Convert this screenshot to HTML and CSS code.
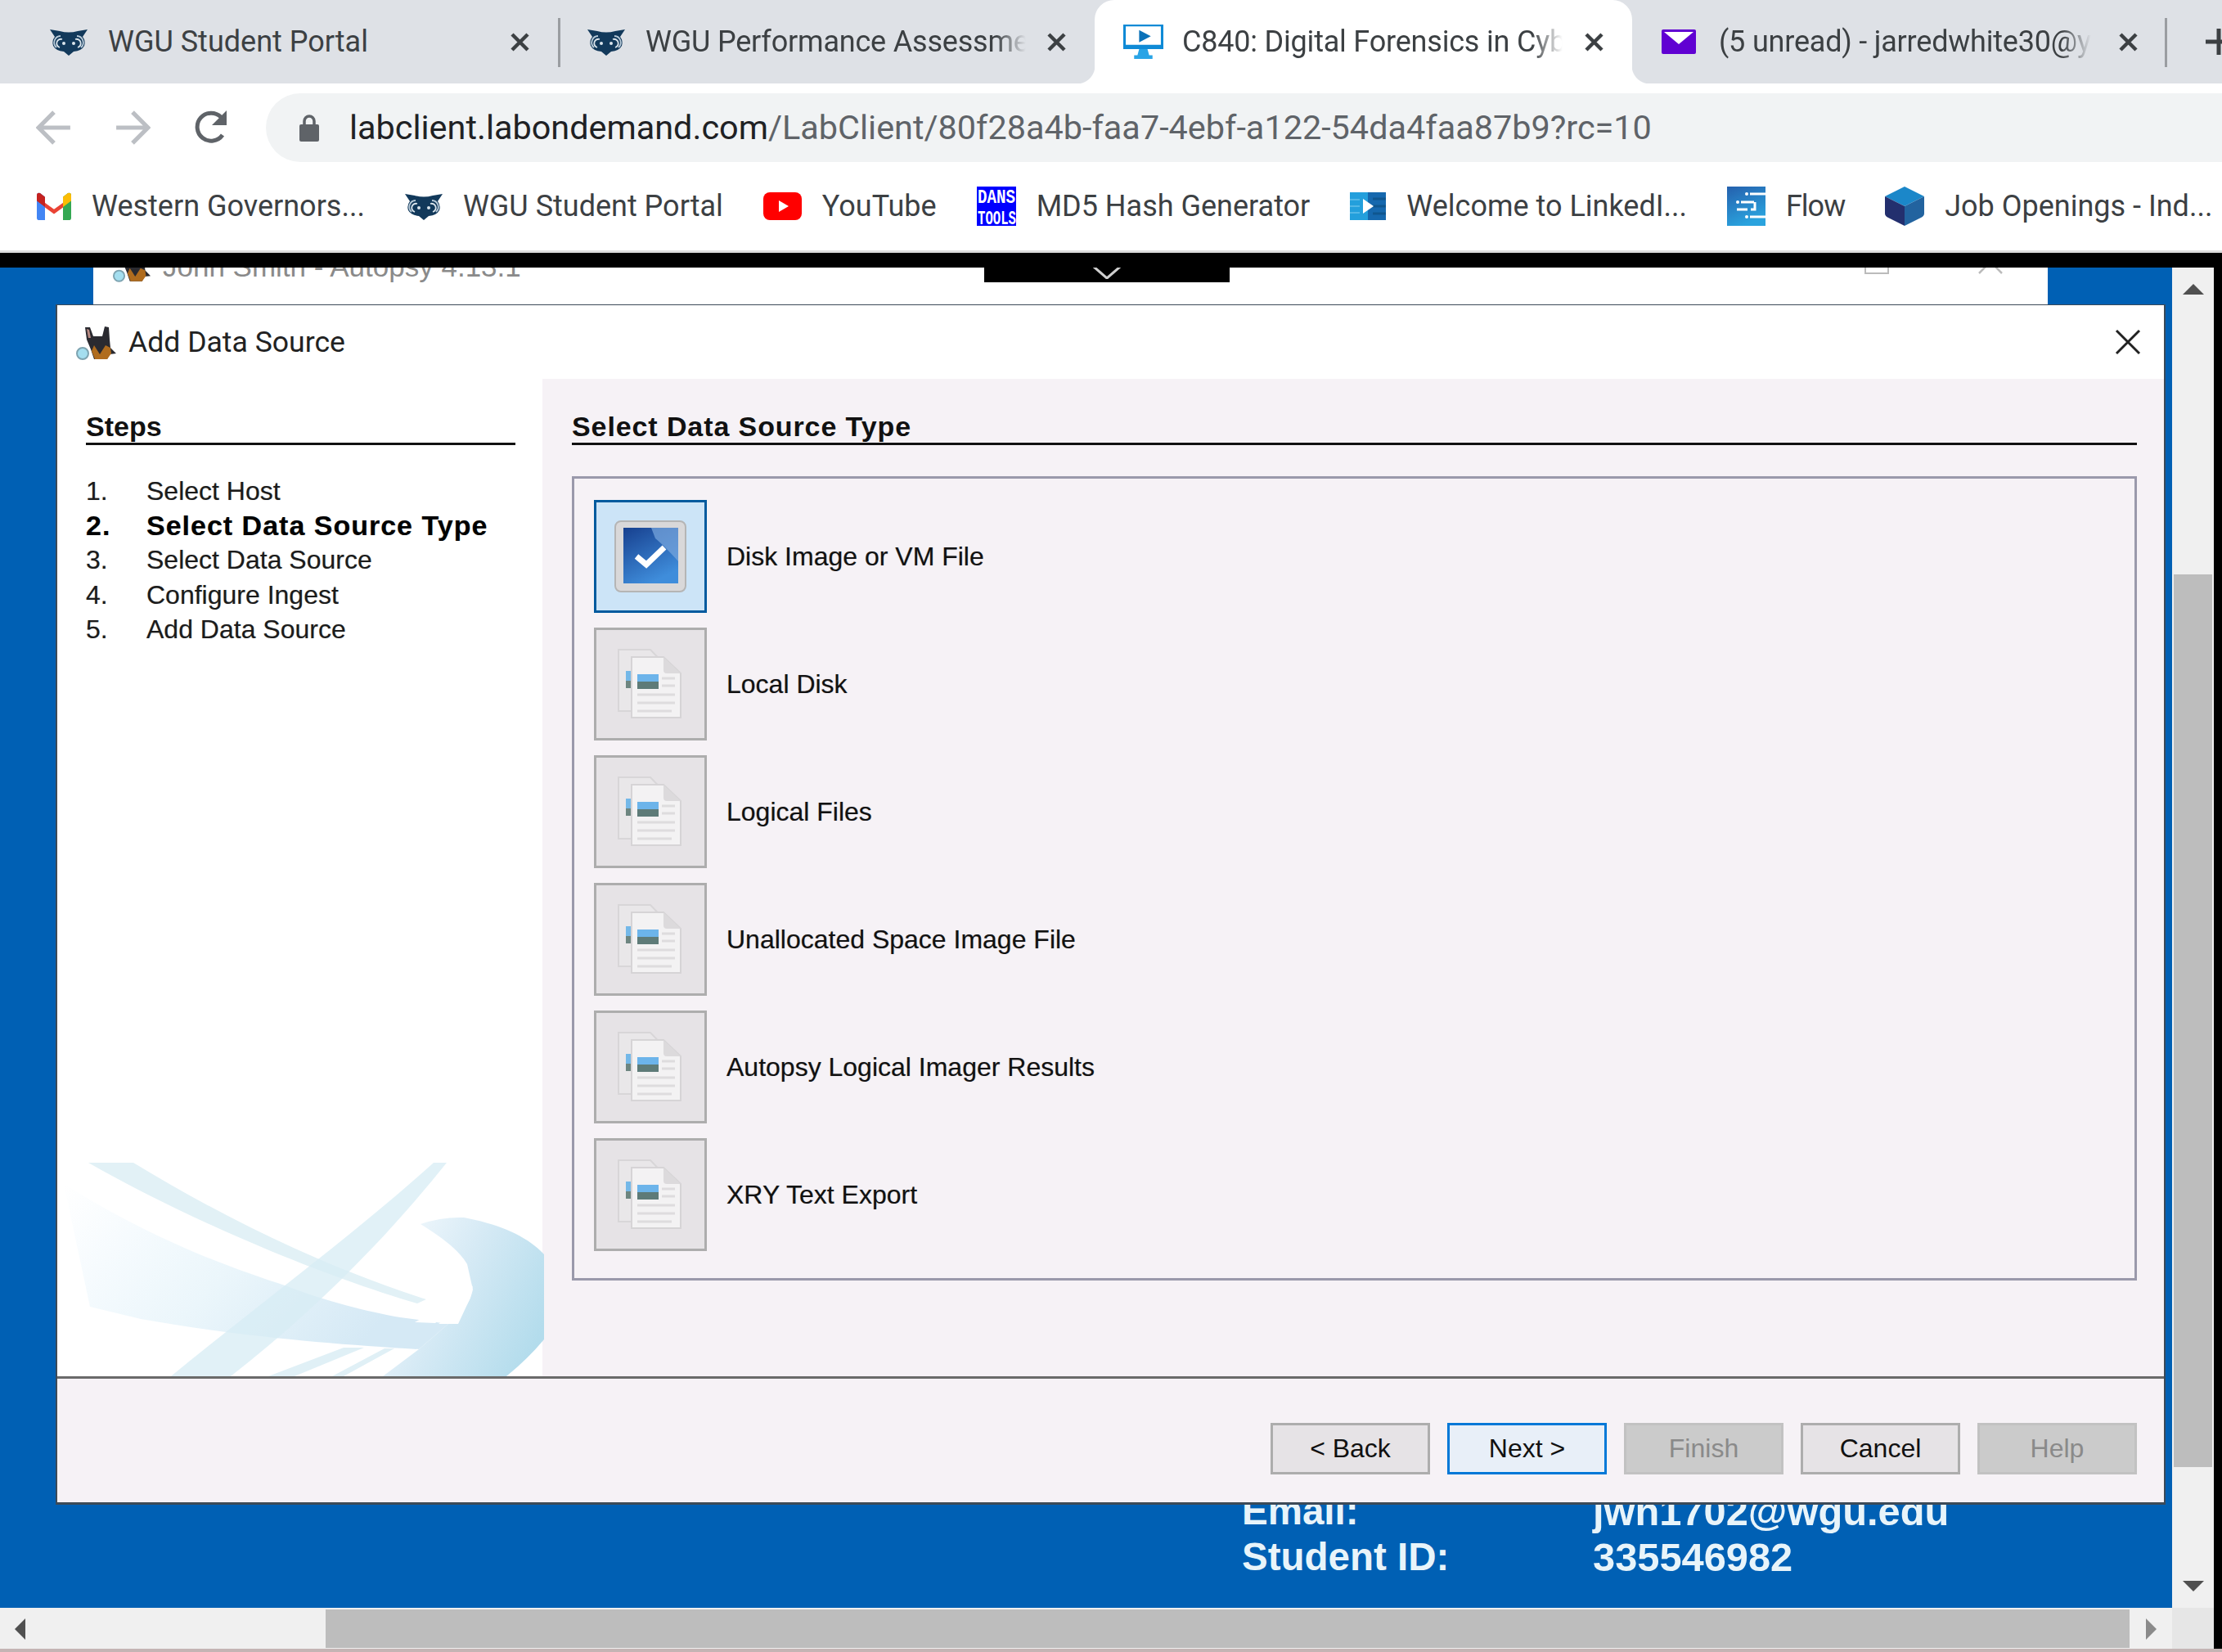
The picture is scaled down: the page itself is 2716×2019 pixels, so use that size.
FILE: index.html
```html
<!DOCTYPE html>
<html lang="en">
<head>
    <meta charset="UTF-8">
    <meta name="viewport" content="width=device-width, initial-scale=1.0">
    <title>Add Data Source</title>
    <link rel="stylesheet" href="styles.css">
</head>
<body>
  <svg class="defs" width="0" height="0">
    <defs>
      <symbol id="owl" viewBox="0 0 46 33">
        <path d="M0 1 L12 3 Q23 6 34 3 L46 1 L40 10 Q44 15 42 21 Q39 27 29 28 L23 33 L17 28 Q7 27 4 21 Q2 15 6 10 Z" fill="#12395b"/>
        <path d="M8 23 A8 8 0 0 1 13 9 M38 23 A8 8 0 0 0 33 9" fill="none" stroke="#b9cbd9" stroke-width="1.8"/>
        <path d="M12 23 A5 5 0 0 1 15 13 M34 23 A5 5 0 0 0 31 13" fill="none" stroke="#dbe5ec" stroke-width="1.8"/>
        <circle cx="17" cy="18" r="2" fill="#dbe5ec"/>
        <circle cx="29" cy="18" r="2" fill="#dbe5ec"/>
      </symbol>
      <symbol id="x-mark" viewBox="0 0 23 23">
        <path d="M2 2 L21 21 M21 2 L2 21" stroke="#3c4043" stroke-width="4.5"/>
      </symbol>
      <symbol id="docs" viewBox="0 0 80 90">
        <path d="M1 3 H40 L60 24 V78 H1 Z" fill="#e9e7e9" stroke="#d8d6d8" stroke-width="2"/>
        <rect x="10" y="29" width="12" height="12" fill="#74b8e8"/>
        <rect x="10" y="41" width="12" height="9" fill="#6d8580"/>
        <path d="M17 12 H56 L77 32 V86 H17 Z" fill="#f3f2f3" stroke="#d6d4d6" stroke-width="2"/>
        <path d="M56 12 L77 32 H60 Q56 32 56 28 Z" fill="#dcdadc"/>
        <rect x="24" y="33" width="26" height="9" fill="#6cb4ea"/>
        <rect x="24" y="42" width="26" height="9" fill="#5e7b78"/>
        <path d="M54 38 H70 M54 47 H70 M24 58 H70 M24 68 H70 M24 78 H66" stroke="#dedcde" stroke-width="3"/>
      </symbol>
      <linearGradient id="screen-fill" x1="0" y1="0" x2="0.5" y2="1">
        <stop offset="0" stop-color="#17408f"/>
        <stop offset="1" stop-color="#3f8ddb"/>
      </linearGradient>
      <linearGradient id="swoosh-a" x1="0" y1="0" x2="1" y2="0.4">
        <stop offset="0" stop-color="#ffffff"/>
        <stop offset="0.25" stop-color="#f6fbfe"/>
        <stop offset="0.55" stop-color="#ebf6fb"/>
        <stop offset="1" stop-color="#d5e9f5"/>
      </linearGradient>
      <linearGradient id="swoosh-b" x1="0" y1="0.2" x2="1" y2="0.7">
        <stop offset="0" stop-color="#f3f9fd"/>
        <stop offset="0.45" stop-color="#d6eaf5"/>
        <stop offset="1" stop-color="#b3dcec"/>
      </linearGradient>
      <linearGradient id="flow-fill" x1="0" y1="0" x2="0.4" y2="1">
        <stop offset="0" stop-color="#2560ad"/>
        <stop offset="1" stop-color="#2aa3de"/>
      </linearGradient>
    </defs>
  </svg>

  <div class="tabstrip">
    <div class="tab tab-first">
      <svg class="tab-icon" viewBox="0 0 46 33"><use href="#owl"/></svg>
      <span class="tab-title">WGU Student Portal</span>
      <svg class="tab-x" viewBox="0 0 23 23"><use href="#x-mark"/></svg>
    </div>
    <div class="tab tab-second">
      <svg class="tab-icon" viewBox="0 0 46 33"><use href="#owl"/></svg>
      <span class="tab-title fade">WGU Performance Assessmer</span>
      <svg class="tab-x" viewBox="0 0 23 23"><use href="#x-mark"/></svg>
    </div>
    <div class="tab tab-active">
      <svg class="tab-icon" viewBox="0 0 48 56" preserveAspectRatio="none">
        <path d="M0 0 H48 V40 H0 Z" fill="#fff"/>
        <path d="M1.5 1.5 H46.5 V38 H1.5 Z" fill="none" stroke="#0f8ad6" stroke-width="3"/>
        <rect y="33" width="48" height="7" fill="#0f8ad6"/>
        <path d="M19 9 L33 19 L19 29 Z" fill="#0b72b9"/>
        <path d="M19 40 H29 L31 50 H35 V56 H13 V50 H17 Z" fill="#29a4e6"/>
      </svg>
      <span class="tab-title fade">C840: Digital Forensics in Cyb</span>
      <svg class="tab-x" viewBox="0 0 23 23"><use href="#x-mark"/></svg>
    </div>
    <div class="tab tab-last">
      <svg class="tab-icon" viewBox="0 0 42 30">
        <rect width="42" height="30" rx="2" fill="#6001d2"/>
        <path d="M3 3 H39 L21 18 Z" fill="#fff"/>
      </svg>
      <span class="tab-title fade">(5 unread) - jarredwhite30@y</span>
      <svg class="tab-x" viewBox="0 0 23 23"><use href="#x-mark"/></svg>
    </div>
    <svg class="new-tab" viewBox="0 0 32 32"><path d="M16 0 V32 M0 16 H32" stroke="#3c4043" stroke-width="5"/></svg>
  </div>

  <div class="toolbar">
    <svg class="nav-icon back" viewBox="0 0 42 42"><path d="M40 21 H4 M21 3 L3 21 L21 39" fill="none" stroke="#bcbfc4" stroke-width="5"/></svg>
    <svg class="nav-icon forward" viewBox="0 0 42 42"><path d="M2 21 H38 M21 3 L39 21 L21 39" fill="none" stroke="#bcbfc4" stroke-width="5"/></svg>
    <svg class="nav-icon reload" viewBox="0 0 44 44"><path d="M36 31 A17 17 0 1 1 34 9" fill="none" stroke="#5f6368" stroke-width="5"/><path d="M41 1 V19 H23 Z" fill="#5f6368"/></svg>
    <div class="omnibox">
      <svg class="lock" viewBox="0 0 24 34"><path d="M6 15 V9 A6 6 0 0 1 18 9 V15" fill="none" stroke="#5f6368" stroke-width="3.5"/><rect y="13" width="24" height="21" rx="2" fill="#5f6368"/></svg>
      <span class="url"><b>labclient.labondemand.com</b>/LabClient/80f28a4b-faa7-4ebf-a122-54da4faa87b9?rc=10</span>
    </div>
  </div>

  <div class="bookmarks">
    <a class="mark">
      <svg viewBox="0 0 42 36" width="42" height="34" preserveAspectRatio="none">
        <path d="M0 6 L21 22 L42 6 V12 L21 28 L0 12 Z" fill="#ea4335"/>
        <path d="M0 4 Q0 0 4 1 L10 6 V36 H3 Q0 36 0 33 Z" fill="#4285f4"/>
        <path d="M42 4 Q42 0 38 1 L32 6 V36 H39 Q42 36 42 33 Z" fill="#34a853"/>
        <path d="M32 6 L38 1 Q42 0 42 4 V11 L32 19 Z" fill="#fbbc04"/>
        <path d="M0 4 Q0 0 4 1 L10 6 V19 L0 11 Z" fill="#c5221f"/>
      </svg>
      <span>Western Governors...</span>
    </a>
    <a class="mark">
      <svg viewBox="0 0 46 33" width="46" height="33"><use href="#owl"/></svg>
      <span>WGU Student Portal</span>
    </a>
    <a class="mark">
      <svg viewBox="0 0 47 34" width="47" height="34"><rect width="47" height="34" rx="8" fill="#f00"/><path d="M19 10 L31 17 L19 24 Z" fill="#fff"/></svg>
      <span>YouTube</span>
    </a>
    <a class="mark">
      <svg class="dans" viewBox="0 0 48 48" width="48" height="48">
        <rect width="48" height="48" fill="#0000ff"/>
        <text x="1" y="20" textLength="46" lengthAdjust="spacingAndGlyphs">DANS</text>
        <text x="1" y="46" textLength="47" lengthAdjust="spacingAndGlyphs">TOOLS</text>
      </svg>
      <span>MD5 Hash Generator</span>
    </a>
    <a class="mark">
      <svg viewBox="0 0 44 34" width="44" height="34">
        <rect width="22" height="34" fill="#239fdc"/>
        <rect x="22" width="22" height="34" fill="#1668ae"/>
        <path d="M0 9 H12 M0 17 H12 M0 25 H12" stroke="#53b7e6" stroke-width="2"/>
        <path d="M28 8 H44 M28 17 H44 M28 26 H44" stroke="#0f568f" stroke-width="3"/>
        <path d="M16 8 L29 17 L16 26 Z" fill="#fff"/>
      </svg>
      <span>Welcome to LinkedI...</span>
    </a>
    <a class="mark mark-flow">
      <svg viewBox="0 0 47 48" width="47" height="48">
        <rect width="47" height="48" fill="url(#flow-fill)"/>
        <circle cx="24" cy="9" r="2" fill="#fff"/>
        <circle cx="13" cy="19" r="2" fill="#fff"/>
        <circle cx="24" cy="37" r="2" fill="#fff"/>
        <path d="M28 9 H47 M17 19 H33 M12 28 H25 M29 28 H34 V19 M28 37 H47" fill="none" stroke="#fff" stroke-width="3"/>
      </svg>
      <span>Flow</span>
    </a>
    <a class="mark">
      <svg viewBox="0 0 48 48" width="48" height="48"><path d="M24 0 L48 12 L24 24 L0 12 Z" fill="#1b87c9"/><path d="M0 12 L24 24 V48 L4 38 Q0 36 0 33 Z" fill="#232f6e"/><path d="M48 12 L24 24 V48 L44 38 Q48 36 48 33 Z" fill="#22639f"/></svg>
      <span>Job Openings - Ind...</span>
    </a>
  </div>

  <div class="remote-bar"></div>

  <div class="remote">
    <div class="screen">
      <div class="behind-window">
        <svg class="behind-dog" viewBox="8 5 50 44" width="47" height="42"><use href="#dog"/></svg>
        <span class="behind-title">John Smith - Autopsy 4.13.1</span>
        <span class="behind-max"></span>
        <svg class="behind-close" viewBox="0 0 30 30" width="30" height="30"><path d="M1 1 L29 29 M29 1 L1 29" stroke="#bbb" stroke-width="2.5"/></svg>
      </div>
      <div class="drop-tab">
        <svg viewBox="0 0 34 16" width="34" height="16"><path d="M1 1 L17 15 L33 1" fill="none" stroke="#cfcfcf" stroke-width="3"/></svg>
      </div>

      <dl class="student-info">
        <dt>Email:</dt><dd>jwh1702@wgu.edu</dd>
        <dt>Student ID:</dt><dd>335546982</dd>
      </dl>

      <div class="dialog">
        <div class="dialog-title">
          <svg class="dog" viewBox="8 5 50 44" width="50" height="44">
            <g id="dog">
              <path d="M19 9 L25 9 L29 20 H40 L43 8 L48 9 L49 24 L50 34 L57 41 L49 42 L46 48 H30 L26 36 L21 24 Z" fill="#2a2a30"/>
              <path d="M21 11 L24 12 L26 22 L23 22 Z" fill="#b98b83"/>
              <path d="M30 31 L37 42 L44 31 L50 34 L51 41 L46 48 H31 L27 38 Z" fill="#b06c1e"/>
              <circle cx="16" cy="41" r="7" fill="#a4deef" stroke="#7da3b0" stroke-width="2"/>
            </g>
          </svg>
          <span class="dialog-name">Add Data Source</span>
          <svg class="dialog-close" viewBox="0 0 32 32" width="32" height="32"><path d="M2 2 L30 30 M30 2 L2 30" stroke="#222" stroke-width="3"/></svg>
        </div>

        <div class="dialog-body">
          <aside class="steps">
            <h4 class="rule-head">Steps</h4>
            <ol class="step-list">
              <li><span>1.</span>Select Host</li>
              <li class="current"><span>2.</span>Select Data Source Type</li>
              <li><span>3.</span>Select Data Source</li>
              <li><span>4.</span>Configure Ingest</li>
              <li><span>5.</span>Add Data Source</li>
            </ol>
            <svg class="swoosh" viewBox="0 0 595 261" width="595" height="261">
              <path d="M8 26 C110 90 200 125 281 151 C330 170 380 182 419 189 L478 197 L442 228 C340 222 220 212 102 191 L40 176 Z" fill="url(#swoosh-a)"/>
              <path d="M38 0 H93 C200 65 320 125 451 167 L440 172 C330 140 170 75 38 0 Z" fill="#e2f1f6"/>
              <path d="M460 0 H476 C400 95 310 185 212 261 H139 C250 170 360 90 460 0 Z" fill="#d7ecf4" fill-opacity="0.75"/>
              <path d="M258 261 L350 226 H375 L290 261 Z M336 261 L400 227 H412 L350 261 Z" fill="#e0f0f6"/>
              <path d="M444 75 Q470 66 497 67 C540 75 575 90 595 112 V216 Q575 240 549 261 H398 L442 228 L478 197 C495 185 505 170 508 155 L501 124 C490 105 465 88 444 75 Z" fill="url(#swoosh-b)"/>
              <path d="M437 195 L469 177 L482 167 L492 172 L462 196 Z M466 197 L490 180 L508 150 L505 165 L490 197 Z" fill="#fff"/>
            </svg>
          </aside>

          <section class="types">
            <h4 class="rule-head">Select Data Source Type</h4>
            <div class="type-box">
              <div class="type-row">
                <div class="type-btn selected">
                  <svg viewBox="0 0 88 88" width="88" height="88">
                    <rect x="1" y="1" width="86" height="86" rx="7" fill="#d9d8d9" stroke="#b5b5b5" stroke-width="2"/>
                    <rect x="11" y="9" width="67" height="68" fill="url(#screen-fill)"/>
                    <path d="M45 9 H78 V50 Q60 30 50 22 Z" fill="#7ba8de" fill-opacity="0.7"/>
                    <path d="M27 44 L39 54 L61 33" fill="none" stroke="#fff" stroke-width="7"/>
                  </svg>
                </div>
                <span class="type-label">Disk Image or VM File</span>
              </div>
              <div class="type-row">
                <div class="type-btn"><svg viewBox="0 0 80 90" width="80" height="90"><use href="#docs"/></svg></div>
                <span class="type-label">Local Disk</span>
              </div>
              <div class="type-row">
                <div class="type-btn"><svg viewBox="0 0 80 90" width="80" height="90"><use href="#docs"/></svg></div>
                <span class="type-label">Logical Files</span>
              </div>
              <div class="type-row">
                <div class="type-btn"><svg viewBox="0 0 80 90" width="80" height="90"><use href="#docs"/></svg></div>
                <span class="type-label">Unallocated Space Image File</span>
              </div>
              <div class="type-row">
                <div class="type-btn"><svg viewBox="0 0 80 90" width="80" height="90"><use href="#docs"/></svg></div>
                <span class="type-label">Autopsy Logical Imager Results</span>
              </div>
              <div class="type-row">
                <div class="type-btn"><svg viewBox="0 0 80 90" width="80" height="90"><use href="#docs"/></svg></div>
                <span class="type-label">XRY Text Export</span>
              </div>
            </div>
          </section>
        </div>

        <div class="dialog-foot">
          <button type="button">&lt; Back</button>
          <button type="button" class="default">Next &gt;</button>
          <button type="button" disabled>Finish</button>
          <button type="button">Cancel</button>
          <button type="button" disabled>Help</button>
        </div>
      </div>
    </div>

    <div class="vscroll">
      <span class="arrow arrow-up"></span>
      <div class="vthumb"></div>
      <span class="arrow arrow-down"></span>
    </div>
    <div class="remote-edge"></div>
  </div>

  <div class="hscroll">
    <span class="arrow arrow-left"></span>
    <div class="hthumb"></div>
    <span class="arrow arrow-right"></span>
    <div class="corner"></div>
  </div>
</body>
</html>
```

FILE: styles.css
```css
* {
    box-sizing: border-box;
}
html, body {
    margin: 0;
    padding: 0;
}
body {
    width: 2716px;
    height: 2019px;
    overflow: hidden;
    background-color: #c4b4b4;
    font-family: "Liberation Sans", Arial, sans-serif;
    color: #000;
}
.defs {
    display: block;
    height: 0;
}

/* tabs */
.tabstrip {
    height: 102px;
    display: flex;
    background-color: #dee1e6;
    position: relative;
}
.tab {
    flex: none;
    display: flex;
    align-items: center;
    height: 102px;
    padding-right: 35px;
    font-family: Roboto, sans-serif;
    font-size: 36px;
    color: #3c4043;
    position: relative;
}
.tab-first {
    width: 682px;
    padding-left: 61px;
}
.tab-second {
    width: 656px;
    padding-left: 33px;
    border-left: 3px solid #9a9da1;
    background-clip: padding-box;
}
.tab-second::after {
    content: "";
    position: absolute;
    left: -3px;
    top: 0;
    width: 3px;
    height: 22px;
    background-color: #dee1e6;
}
.tab-second::before {
    content: "";
    position: absolute;
    left: -3px;
    bottom: 0;
    width: 3px;
    height: 20px;
    background-color: #dee1e6;
}
.tab-active {
    width: 657px;
    padding-left: 35px;
    background-color: #fff;
    border-radius: 24px 24px 0 0;
}
.tab-active::before,
.tab-active::after {
    content: "";
    position: absolute;
    bottom: 0;
    width: 22px;
    height: 22px;
}
.tab-active::before {
    left: -22px;
    background: radial-gradient(circle at 0 0, transparent 22px, #fff 23px);
}
.tab-active::after {
    right: -22px;
    background: radial-gradient(circle at 100% 0, transparent 22px, #fff 23px);
}
.tab-last {
    width: 653px;
    padding-left: 36px;
}
.tab-icon {
    width: 46px;
    height: 33px;
    flex: none;
    margin-right: 25px;
}
.tab-active .tab-icon {
    width: 49px;
    height: 42px;
    margin-right: 23px;
}
.tab-last .tab-icon {
    width: 42px;
    height: 30px;
    margin-right: 28px;
}
.tab-title {
    white-space: nowrap;
    overflow: hidden;
    flex: none;
    max-width: 465px;
}
.fade {
    letter-spacing: -0.2px;
    -webkit-mask-image: linear-gradient(to right, #000 92%, transparent 100%);
    mask-image: linear-gradient(to right, #000 92%, transparent 100%);
}
.tab-x {
    flex: none;
    width: 23px;
    height: 23px;
    margin-left: auto;
}
.tab-last::after {
    content: "";
    position: absolute;
    right: -1px;
    top: 22px;
    height: 60px;
    width: 3px;
    background-color: #9a9da1;
}
.new-tab {
    flex: none;
    width: 32px;
    height: 32px;
    margin: 35px 0 0 48px;
}

/* toolbar */
.toolbar {
    height: 96px;
    display: flex;
    align-items: flex-start;
    background-color: #fff;
    padding: 12px 0 0 44px;
}
.nav-icon {
    flex: none;
    width: 44px;
    height: 44px;
    margin-top: 20px;
}
.forward {
    margin-left: 52px;
}
.reload {
    margin-left: 52px;
}
.omnibox {
    margin-left: 45px;
    flex: 1;
    height: 84px;
    display: flex;
    align-items: center;
    padding-left: 41px;
    background-color: #f1f3f4;
    border-radius: 42px 0 0 42px;
}
.lock {
    width: 24px;
    height: 34px;
    flex: none;
}
.url {
    margin-left: 37px;
    font-family: Roboto, sans-serif;
    font-size: 41.4px;
    color: #5f6368;
    white-space: nowrap;
}
.url b {
    font-weight: normal;
    color: #202124;
}

/* bookmarks */
.bookmarks {
    height: 111px;
    display: flex;
    align-items: center;
    gap: 49px;
    padding-left: 45px;
    background-color: #fff;
    border-bottom: 3px solid #dcdcdc;
    white-space: nowrap;
}
.mark {
    display: flex;
    align-items: center;
    gap: 25px;
    font-family: Roboto, sans-serif;
    font-size: 36px;
    color: #3c4043;
}
.mark svg {
    flex: none;
}
.mark-flow {
    letter-spacing: -1px;
}
.dans text {
    font-family: "Liberation Mono", monospace;
    font-size: 24px;
    font-weight: bold;
    letter-spacing: 0;
    fill: #fff;
}

/* remote session */
.remote-bar {
    height: 18px;
    background-color: #000;
}
.remote {
    height: 1638px;
    display: flex;
}
.screen {
    flex: none;
    width: 2655px;
    background-color: #0060b4;
    position: relative;
    overflow: hidden;
}
.behind-window {
    position: absolute;
    left: 114px;
    top: 0;
    width: 2389px;
    height: 45px;
    background-color: #fff;
    overflow: hidden;
}
.behind-dog {
    position: absolute;
    left: 24px;
    top: -24px;
}
.behind-title {
    position: absolute;
    left: 85px;
    top: -21px;
    font-size: 35px;
    color: #8a8a8a;
    white-space: nowrap;
}
.behind-max {
    position: absolute;
    left: 2165px;
    top: -20px;
    width: 30px;
    height: 28px;
    border: 2px solid #bbb;
}
.behind-close {
    position: absolute;
    left: 2304px;
    top: -22px;
}
.drop-tab {
    position: absolute;
    left: 1203px;
    top: 0;
    width: 300px;
    height: 18px;
    background-color: #000;
    display: flex;
    justify-content: center;
}
.drop-tab svg {
    margin-top: -2px;
}
.student-info {
    position: absolute;
    left: 1518px;
    top: 1493px;
    margin: 0;
    display: grid;
    grid-template-columns: 429px auto;
    row-gap: 2px;
    font-size: 47.5px;
    font-weight: bold;
    line-height: 54px;
    color: #e8f4fa;
}
.student-info dd {
    margin: 0;
    font-size: 48.8px;
}

/* dialog */
.dialog {
    position: absolute;
    left: 68px;
    top: 45px;
    width: 2579px;
    height: 1467px;
    display: flex;
    flex-direction: column;
    background-color: #f6f2f6;
    border: 2px solid #3c4a58;
    border-width: 1px 2px 3px 2px;
    font-family: "Liberation Sans", Arial, sans-serif;
    font-size: 32px;
}
.dialog-title {
    flex: none;
    height: 90px;
    display: flex;
    align-items: center;
    padding: 0 28px 0 23px;
    background-color: #fff;
}
.dialog-name {
    margin-left: 14px;
    flex: 1;
    font-family: Roboto, sans-serif;
    font-size: 35.6px;
    color: #222;
}
.dialog-body {
    flex: none;
    height: 1222px;
    display: flex;
    border-bottom: 3px solid #6a6a6a;
}
.steps {
    flex: none;
    width: 593px;
    padding: 41px 33px 0 35px;
    background-color: #fff;
    position: relative;
}
.types {
    flex: 1;
    padding: 41px 33px 0 36px;
}
.rule-head {
    margin: 0;
    height: 40px;
    line-height: 34px;
    font-size: 34px;
    font-weight: bold;
    border-bottom: 3px solid #111;
    color: #111;
}
.types .rule-head {
    letter-spacing: 0.9px;
}
.step-list {
    list-style: none;
    margin: 35px 0 0;
    padding: 0;
    text-shadow: 0 0 1px rgba(0, 0, 0, 0.35);
}
.step-list li {
    height: 42.2px;
    line-height: 42px;
    color: #1b1b1b;
    white-space: nowrap;
}
.step-list li span {
    display: inline-block;
    width: 74px;
}
.step-list .current {
    font-size: 34px;
    font-weight: bold;
    letter-spacing: 1px;
    color: #000;
}
.swoosh {
    position: absolute;
    left: 0;
    bottom: 0;
}
.type-box {
    margin-top: 38px;
    height: 983px;
    border: 3px solid #9a99ab;
    padding: 26px 24px 0;
    display: flex;
    flex-direction: column;
    gap: 18px;
}
.type-row {
    display: flex;
    align-items: center;
    gap: 24px;
}
.type-btn {
    flex: none;
    width: 138px;
    height: 138px;
    display: flex;
    align-items: center;
    justify-content: center;
    background-color: #e6e3e6;
    border: 3px solid #adadad;
}
.type-btn.selected {
    background-color: #cce4f7;
    border-color: #005a9e;
}
.type-label {
    color: #111;
    text-shadow: 0 0 1px rgba(0, 0, 0, 0.35);
}
.dialog-foot {
    flex: 1;
    display: flex;
    justify-content: flex-end;
    gap: 21px;
    padding: 54px 33px 0 0;
}
.dialog-foot button {
    width: 195px;
    height: 63px;
    background-color: #e6e3e6;
    border: 3px solid #adadad;
    font-family: "Liberation Sans", Arial, sans-serif;
    font-size: 32px;
    color: #111;
    padding: 0;
}
.dialog-foot button.default {
    background-color: #e8eff8;
    border-color: #0078d7;
}
.dialog-foot button:disabled {
    background-color: #cbcbcb;
    border-color: #c2c2c2;
    color: #8a8a8a;
}

/* scrollbars */
.vscroll {
    flex: none;
    width: 51px;
    background-color: #f0f0f0;
    position: relative;
}
.vthumb {
    position: absolute;
    left: 2px;
    right: 2px;
    top: 375px;
    height: 1091px;
    background-color: #bdbdbd;
}
.remote-edge {
    flex: 1;
    background-color: #000;
}
.hscroll {
    height: 50px;
    background-color: #f0f0f0;
    position: relative;
}
.hthumb {
    position: absolute;
    left: 398px;
    top: 2px;
    width: 2205px;
    height: 47px;
    background-color: #bdbdbd;
}
.corner {
    position: absolute;
    left: 2655px;
    top: 0;
    bottom: 0;
    width: 51px;
    background-color: #e6e6e6;
}
.hscroll::after {
    content: "";
    position: absolute;
    left: 2706px;
    right: 0;
    top: 0;
    bottom: 0;
    background-color: #000;
}
.arrow {
    position: absolute;
    width: 0;
    height: 0;
    border-style: solid;
    border-color: transparent;
}
.arrow-up {
    left: 13px;
    top: 20px;
    border-width: 0 13px 13px;
    border-bottom-color: #505050;
}
.arrow-down {
    left: 13px;
    top: 1605px;
    border-width: 13px 13px 0;
    border-top-color: #505050;
}
.arrow-left {
    left: 18px;
    top: 13px;
    border-width: 13px 13px 13px 0;
    border-right-color: #505050;
}
.arrow-right {
    left: 2623px;
    top: 13px;
    border-width: 13px 0 13px 13px;
    border-left-color: #8a8a8a;
}
```
